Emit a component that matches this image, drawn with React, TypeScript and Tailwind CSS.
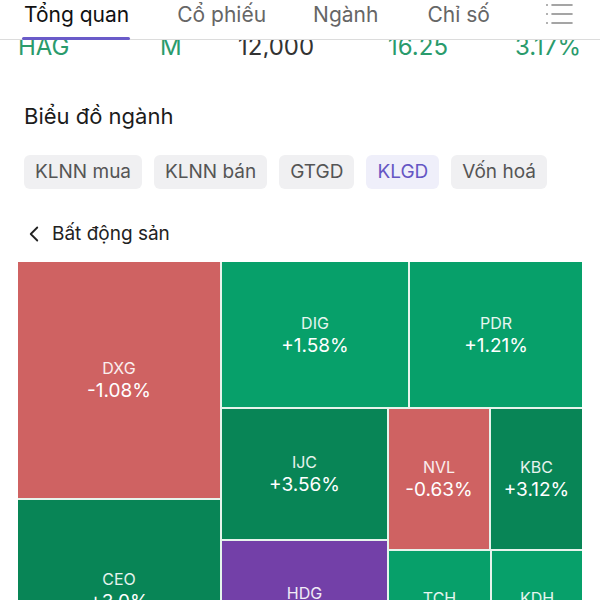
import { ChevronLeft } from 'lucide-react';

const FONT = { fontFamily: 'Inter, "Noto Sans", "Liberation Sans", sans-serif' };

const TABS = [
  { label: 'Tổng quan', ml: 'ml-[24px]' },
  { label: 'Cổ phiếu', ml: 'ml-[48px]' },
  { label: 'Ngành', ml: 'ml-[47px]' },
  { label: 'Chỉ số', ml: 'ml-[49px]' },
];
const CHIPS = ['KLNN mua', 'KLNN bán', 'GTGD', 'KLGD', 'Vốn hoá'];

function Cell({ code, pct, className }: { code: string; pct: string; className: string }) {
  return (
    <div className={`flex flex-col items-center justify-center text-white ${className}`}>
      <div className="text-[16px] leading-[22px] text-white/90">{code}</div>
      <div className="text-[19px] leading-[24px]">{pct}</div>
    </div>
  );
}

export default function App() {
  return (
    <div className="w-[600px] h-[600px] overflow-hidden bg-white" style={FONT}>
      <div className="relative h-[40px] border-b border-[#dcdcdc] flex items-start">
        <div className="flex pt-[1px]">
          {TABS.map((t, i) => (
            <div
              key={t.label}
              className={`relative text-[21px] leading-[28px] ${t.ml} ${i === 0 ? 'text-[#111]' : 'text-[#666]'}`}
            >
              {t.label}
              {i === 0 && <div className="absolute left-[-2px] right-[-1px] top-[36px] h-[3px] rounded-full bg-[#6a5bc9]" />}
            </div>
          ))}
        </div>
        <svg className="absolute left-[544px] top-[2px]" width="30" height="26" viewBox="0 0 30 26" fill="none">
          {[3, 12, 21].map((y) => (
            <g key={y}>
              <circle cx="3" cy={y} r="1" fill="#999" />
              <line x1="8" y1={y} x2="28" y2={y} stroke="#888" strokeWidth="1.6" strokeLinecap="round" />
            </g>
          ))}
        </svg>
      </div>

      <div className="h-[18px] overflow-hidden">
        <div className="relative -mt-[8px] h-[30px] text-[24px] leading-[30px]">
          <span className="absolute left-[18px] text-[#2a9b6c]">HAG</span>
          <span className="absolute left-[160px] text-[#2a9b6c]">M</span>
          <span className="absolute left-[238px] text-[#333]">12,000</span>
          <span className="absolute left-[388px] text-[#2a9b6c]">16.25</span>
          <span className="absolute right-[19px] text-[#2a9b6c]">3.17%</span>
        </div>
      </div>

      <div className="px-[24px] pt-[44px] text-[22px] leading-[28px] text-[#1c1c1c]">Biểu đồ ngành</div>

      <div className="flex gap-[12px] px-[24px] mt-[25px]">
        {CHIPS.map((c) => (
          <div
            key={c}
            className={`h-[34px] px-[11px] rounded-[6px] flex items-center text-[19px] ${
              c === 'KLGD' ? 'bg-[#efeffa] text-[#6556c4]' : 'bg-[#f0f0f2] text-[#555]'
            }`}
          >
            {c}
          </div>
        ))}
      </div>

      <div className="flex items-center gap-[5px] pl-[21px] mt-[31px] h-[28px] text-[19px] text-[#222]">
        <ChevronLeft size={26} strokeWidth={1.7} />
        <span>Bất động sản</span>
      </div>

      <div className="mt-[14px] ml-[18px] w-[564px] h-[420px] flex gap-[2px] bg-[#e6f4ec]">
        <div className="w-[202px] flex flex-col gap-[2px]">
          <Cell code="DXG" pct="-1.08%" className="h-[236px] bg-[#cf6262]" />
          <Cell code="CEO" pct="+3.0%" className="flex-1 bg-[#088556]" />
        </div>
        <div className="flex-1 flex flex-col gap-[2px]">
          <div className="h-[145px] flex gap-[2px]">
            <Cell code="DIG" pct="+1.58%" className="w-[186px] bg-[#07a06a]" />
            <Cell code="PDR" pct="+1.21%" className="flex-1 bg-[#07a06a]" />
          </div>
          <div className="flex-1 flex gap-[2px]">
            <div className="w-[165px] flex flex-col gap-[2px]">
              <Cell code="IJC" pct="+3.56%" className="h-[130px] bg-[#088556]" />
              <Cell code="HDG" pct="+2.1%" className="h-[128px] bg-[#7340a8]" />
              <div className="flex-1 bg-[#07a06a]" />
            </div>
            <div className="flex-1 flex flex-col gap-[2px]">
              <div className="h-[140px] flex gap-[2px]">
                <Cell code="NVL" pct="-0.63%" className="w-[100px] bg-[#cf6262]" />
                <Cell code="KBC" pct="+3.12%" className="flex-1 bg-[#088556]" />
              </div>
              <div className="h-[118px] flex gap-[2px]">
                <Cell code="TCH" pct="+1.9%" className="w-[101px] bg-[#07a06a]" />
                <Cell code="KDH" pct="+1.4%" className="flex-1 bg-[#07a06a]" />
              </div>
              <div className="flex-1 bg-[#07a06a]" />
            </div>
          </div>
        </div>
      </div>
    </div>
  );
}
